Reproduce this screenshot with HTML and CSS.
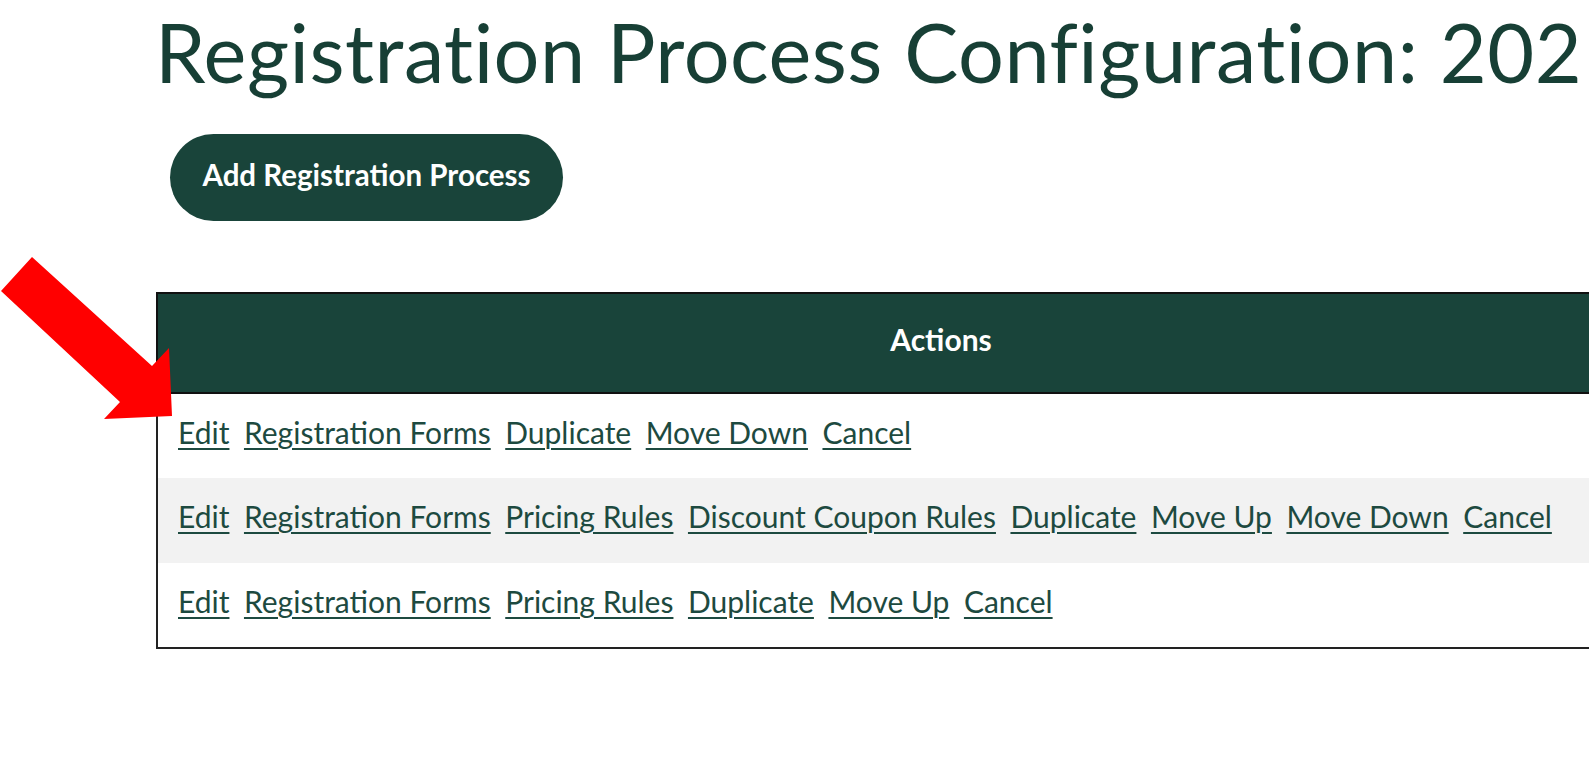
FILE: index.html
```html
<!DOCTYPE html>
<html lang="en">
<head>
<meta charset="utf-8">
<title>Registration Process Configuration</title>
<link rel="stylesheet" href="styles.css">
</head>
<body>
<div class="page">
  <h1 class="title">Registration Process Configuration: 202</h1>
  <div class="toolbar">
    <a class="btn" href="#">Add Registration Process</a>
  </div>
  <table class="grid">
    <thead>
      <tr><th>Actions</th></tr>
    </thead>
    <tbody>
      <tr><td><div class="links">
        <a href="#">Edit</a><a href="#">Registration Forms</a><a href="#">Duplicate</a><a href="#">Move Down</a><a href="#">Cancel</a>
      </div></td></tr>
      <tr class="alt"><td><div class="links">
        <a href="#">Edit</a><a href="#">Registration Forms</a><a href="#">Pricing Rules</a><a href="#">Discount Coupon Rules</a><a href="#">Duplicate</a><a href="#">Move Up</a><a href="#">Move Down</a><a href="#">Cancel</a>
      </div></td></tr>
      <tr><td><div class="links">
        <a href="#">Edit</a><a href="#">Registration Forms</a><a href="#">Pricing Rules</a><a href="#">Duplicate</a><a href="#">Move Up</a><a href="#">Cancel</a>
      </div></td></tr>
    </tbody>
  </table>
  <svg class="arrow" width="180" height="430" viewBox="0 0 180 430" aria-hidden="true">
    <polygon points="32,257 152,366 169,348 172,416 104,419 120,402 1,291" fill="#ff0000"/>
  </svg>
</div>
</body>
</html>
```

FILE: styles.css
```css
html, body {
  margin: 0;
  padding: 0;
  background: #ffffff;
  overflow: hidden;
}

body {
  width: 1589px;
  height: 777px;
  font-family: Lato, "Open Sans", "Liberation Sans", sans-serif;
}

.page {
  position: relative;
  width: 1589px;
  height: 777px;
  overflow: hidden;
  padding-top: 7px;
  box-sizing: border-box;
}

.title {
  margin: 0 0 0 155px;
  font-size: 81px;
  font-weight: 400;
  color: #173f35;
  line-height: 90px;
  white-space: nowrap;
  letter-spacing: 0.5px;
}

.toolbar {
  margin: 37px 0 0 170px;
  display: flex;
}

.btn {
  display: flex;
  align-items: center;
  justify-content: center;
  width: 393px;
  height: 87px;
  padding-bottom: 6px;
  box-sizing: border-box;
  border-radius: 44px;
  background: #19443a;
  color: #ffffff;
  font-size: 29.5px;
  font-weight: 700;
  text-decoration: none;
}

.grid {
  margin: 71px 0 0 156px;
  width: 1570px;
  border-collapse: collapse;
  border-left: 2px solid #222;
  border-bottom: 2px solid #222;
}

.grid th {
  height: 100px;
  background: #19443a;
  color: #ffffff;
  font-size: 30px;
  font-weight: 700;
  text-align: center;
  border: 2px solid #111;
  padding: 0 0 9px 0;
  box-sizing: border-box;
}

.grid td {
  height: 85px;
  padding: 0 0 9px 20px;
  box-sizing: border-box;
  background: #ffffff;
}

.grid tr.alt td {
  background: #f2f2f2;
}

.links {
  display: flex;
  gap: 14.5px;
  align-items: center;
}

.links a {
  color: #1d4a40;
  font-size: 30px;
  text-decoration: underline;
  text-underline-offset: 4px;
  text-decoration-thickness: 2px;
}

.arrow {
  position: absolute;
  left: 0;
  top: 0;
}
```
